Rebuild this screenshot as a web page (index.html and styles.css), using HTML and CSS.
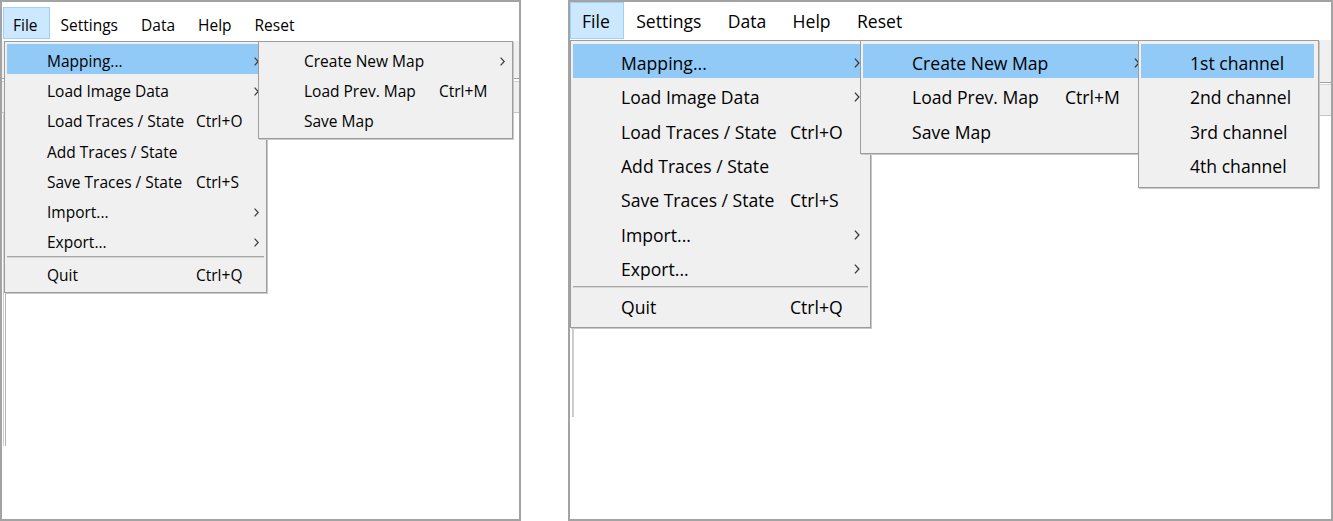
FILE: index.html
```html
<!DOCTYPE html>
<html lang="en">
<head>
<meta charset="utf-8">
<title>Menus</title>
<link rel="stylesheet" href="styles.css">
</head>
<body>
<div class="screens">
  <section class="win win-a">
    <nav class="menubar">
      <span class="mb-item active">File</span>
      <span class="mb-item">Settings</span>
      <span class="mb-item">Data</span>
      <span class="mb-item">Help</span>
      <span class="mb-item">Reset</span>
    </nav>
    <div class="client">
      <div class="toolbar">
        <div class="tb-row tb-row1"></div>
        <div class="tb-row tb-row2"></div>
      </div>
      <div class="workspace"><div class="edge"></div></div>
    </div>

    <div class="menu file-menu">
      <div class="item hl"><span class="label">Mapping...</span><span class="sc"></span><span class="arr"><svg viewBox="0 0 5 9"><path d="M0.6 0.6 L4.2 4.5 L0.6 8.4"/></svg></span></div>
      <div class="item"><span class="label">Load Image Data</span><span class="sc"></span><span class="arr"><svg viewBox="0 0 5 9"><path d="M0.6 0.6 L4.2 4.5 L0.6 8.4"/></svg></span></div>
      <div class="item"><span class="label">Load Traces / State</span><span class="sc">Ctrl+O</span><span class="arr"></span></div>
      <div class="item"><span class="label">Add Traces / State</span><span class="sc"></span><span class="arr"></span></div>
      <div class="item"><span class="label">Save Traces / State</span><span class="sc">Ctrl+S</span><span class="arr"></span></div>
      <div class="item"><span class="label">Import...</span><span class="sc"></span><span class="arr"><svg viewBox="0 0 5 9"><path d="M0.6 0.6 L4.2 4.5 L0.6 8.4"/></svg></span></div>
      <div class="item"><span class="label">Export...</span><span class="sc"></span><span class="arr"><svg viewBox="0 0 5 9"><path d="M0.6 0.6 L4.2 4.5 L0.6 8.4"/></svg></span></div>
      <div class="sep"></div>
      <div class="item"><span class="label">Quit</span><span class="sc">Ctrl+Q</span><span class="arr"></span></div>
    </div>

    <div class="menu sub-menu">
      <div class="item"><span class="label">Create New Map</span><span class="sc"></span><span class="arr"><svg viewBox="0 0 5 9"><path d="M0.6 0.6 L4.2 4.5 L0.6 8.4"/></svg></span></div>
      <div class="item"><span class="label">Load Prev. Map</span><span class="sc">Ctrl+M</span><span class="arr"></span></div>
      <div class="item"><span class="label">Save Map</span><span class="sc"></span><span class="arr"></span></div>
    </div>
  </section>

  <section class="win win-b">
    <nav class="menubar">
      <span class="mb-item active">File</span>
      <span class="mb-item">Settings</span>
      <span class="mb-item">Data</span>
      <span class="mb-item">Help</span>
      <span class="mb-item">Reset</span>
    </nav>
    <div class="client">
      <div class="toolbar">
        <div class="tb-row tb-row1"></div>
        <div class="tb-row tb-row2"></div>
      </div>
      <div class="workspace"><div class="edge"></div></div>
    </div>

    <div class="menu file-menu">
      <div class="item hl"><span class="label">Mapping...</span><span class="sc"></span><span class="arr"><svg viewBox="0 0 5 9"><path d="M0.6 0.6 L4.2 4.5 L0.6 8.4"/></svg></span></div>
      <div class="item"><span class="label">Load Image Data</span><span class="sc"></span><span class="arr"><svg viewBox="0 0 5 9"><path d="M0.6 0.6 L4.2 4.5 L0.6 8.4"/></svg></span></div>
      <div class="item"><span class="label">Load Traces / State</span><span class="sc">Ctrl+O</span><span class="arr"></span></div>
      <div class="item"><span class="label">Add Traces / State</span><span class="sc"></span><span class="arr"></span></div>
      <div class="item"><span class="label">Save Traces / State</span><span class="sc">Ctrl+S</span><span class="arr"></span></div>
      <div class="item"><span class="label">Import...</span><span class="sc"></span><span class="arr"><svg viewBox="0 0 5 9"><path d="M0.6 0.6 L4.2 4.5 L0.6 8.4"/></svg></span></div>
      <div class="item"><span class="label">Export...</span><span class="sc"></span><span class="arr"><svg viewBox="0 0 5 9"><path d="M0.6 0.6 L4.2 4.5 L0.6 8.4"/></svg></span></div>
      <div class="sep"></div>
      <div class="item"><span class="label">Quit</span><span class="sc">Ctrl+Q</span><span class="arr"></span></div>
    </div>

    <div class="menu sub-menu">
      <div class="item hl"><span class="label">Create New Map</span><span class="sc"></span><span class="arr"><svg viewBox="0 0 5 9"><path d="M0.6 0.6 L4.2 4.5 L0.6 8.4"/></svg></span></div>
      <div class="item"><span class="label">Load Prev. Map</span><span class="sc">Ctrl+M</span><span class="arr"></span></div>
      <div class="item"><span class="label">Save Map</span><span class="sc"></span><span class="arr"></span></div>
    </div>

    <div class="menu subsub-menu">
      <div class="item hl"><span class="label">1st channel</span></div>
      <div class="item"><span class="label">2nd channel</span></div>
      <div class="item"><span class="label">3rd channel</span></div>
      <div class="item"><span class="label">4th channel</span></div>
    </div>
  </section>
</div>
</body>
</html>
```

FILE: styles.css
```css
html, body {
  margin: 0;
  padding: 0;
  background: #ffffff;
}

.screens {
  display: flex;
  align-items: flex-start;
}

.win {
  position: relative;
  box-sizing: border-box;
  height: 521px;
  border: 2px solid #a3a3a3;
  background: #ffffff;
  overflow: hidden;
  font-family: "Open Sans", "Noto Sans", sans-serif;
  color: #000;
  display: flex;
  flex-direction: column;
}

/* ---------- left (smaller) window ---------- */
.win-a {
  width: 521px;
  font-size: 15.5px;
  --row: 30.2px;
}
.win-a .menubar {
  padding: 5px 0 2px 1px;
}
.win-a .mb-item {
  height: 32px;
  padding: 3px 11.5px 0 9px;
}
.win-a .mb-item + .mb-item {
  padding-left: 9.5px;
}

/* ---------- right (larger) window ---------- */
.win-b {
  width: 765px;
  margin-left: 47px;
  font-size: 17.6px;
  --row: 34.3px;
}
.win-b .menubar {
  padding: 0 0 1px 0;
}
.win-b .mb-item {
  height: 37px;
  padding: 1px 13px 0 11px;
}
.win-b .mb-item + .mb-item {
  padding-left: 11.3px;
}

/* ---------- menu bar ---------- */
.menubar {
  display: flex;
  flex: none;
}
.mb-item {
  box-sizing: border-box;
  display: flex;
  align-items: center;
  border: 1px solid transparent;
  white-space: nowrap;
}
.mb-item.active {
  background: #cce8ff;
  border-color: #99d1ff;
}

/* ---------- background client area ---------- */
.client {
  flex: 1;
  display: flex;
  flex-direction: column;
}
.toolbar {
  flex: none;
}
.tb-row {
  background: #f0f0f0;
}
.win-a .tb-row1 { height: 37px; border-bottom: 1px solid #a0a0a0; margin-bottom: 2px; }
.win-a .tb-row2 { height: 30px; border-top: 1px solid #d0d0d0; border-bottom: 1px solid #c4c4c4; }
.win-b .tb-row1 { height: 42px; border-bottom: 1px solid #a0a0a0; margin-bottom: 1px; }
.win-b .tb-row2 { height: 30px; border-top: 1px solid #d4d4d4; border-bottom: 1px solid #c4c4c4; }

.workspace {
  display: flex;
}
.edge {
  box-sizing: border-box;
}
.win-a .edge {
  margin-left: 1px;
  width: 3px;
  height: 333px;
  border-left: 1px solid #cfcfcf;
  border-right: 1px solid #b4b4b4;
}
.win-b .edge {
  margin-left: 2px;
  width: 2px;
  height: 301px;
  background: #cdcdcd;
}

/* ---------- popup menus ---------- */
.menu {
  position: absolute;
  box-sizing: border-box;
  background: #f0f0f0;
  border: 1px solid #9c9c9c;
  box-shadow: 1px 1px 0 #c9c9c9;
}
.item {
  box-sizing: border-box;
  display: grid;
  align-items: center;
  height: var(--row);
  white-space: nowrap;
}
.item.hl {
  background: #91c9f7;
}
.arr {
  display: flex;
  justify-content: flex-end;
}
.arr svg {
  fill: none;
  stroke: #3a3a3a;
  stroke-width: 1.2;
}
.sep {
  border-top: 1px solid #a7a7a7;
  border-bottom: 1px solid #d6d6d6;
}

/* left window menus */
.win-a .menu { padding: 2px 2px 0 2px; }
.win-a .file-menu { left: 2px; top: 39px; width: 263px; height: 252px; }
.win-a .sub-menu { left: 256px; top: 39px; width: 255px; height: 98px; }
.win-a .file-menu .item { grid-template-columns: 149px 1fr 20px; padding: 4px 5px 0 40px; }
.win-a .sub-menu .item { grid-template-columns: 135px 1fr 20px; padding: 4px 5px 0 43px; }
.win-a .arr svg { width: 5px; height: 9px; }
.win-a .sep { margin: 1px 0 0 0; }

/* right window menus */
.win-b .menu { padding: 3px 2px 0 2px; }
.win-b .file-menu { left: 0; top: 38px; width: 301px; height: 288px; }
.win-b .sub-menu { left: 290px; top: 38px; width: 291px; height: 114px; }
.win-b .subsub-menu { left: 568px; top: 38px; width: 181px; height: 148px; }
.win-b .file-menu .item { grid-template-columns: 169px 1fr 20px; padding: 4px 8px 0 48px; }
.win-b .sub-menu .item { grid-template-columns: 153px 1fr 20px; padding: 4px 8px 0 49px; }
.win-b .subsub-menu .item { grid-template-columns: 1fr; padding: 4px 4px 0 49px; }
.win-b .subsub-menu { padding-right: 4px; }
.win-b .arr svg { width: 6px; height: 10px; }
.win-b .sep { margin: 2px 0 0 0; }
```
